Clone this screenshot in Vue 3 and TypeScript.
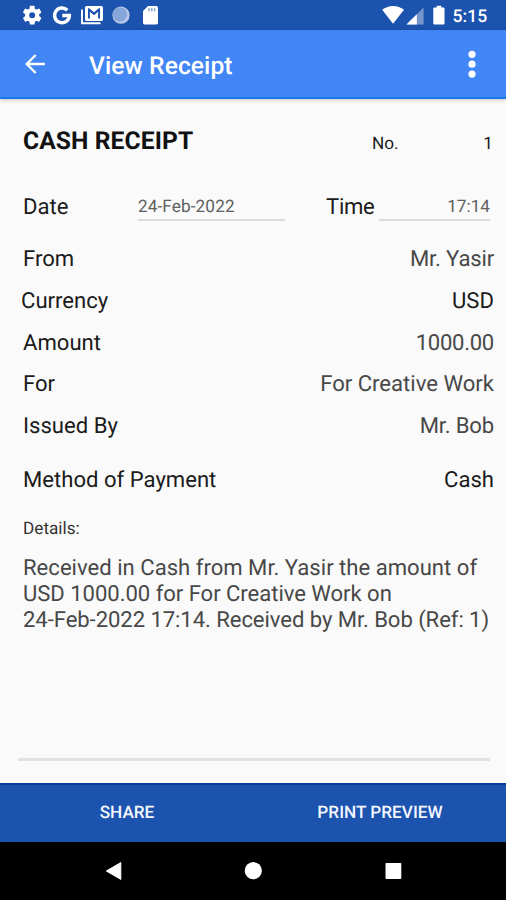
<script setup lang="ts">
interface Field {
  label: string
  value: string
  tone?: string
  shifted?: boolean
}

const fields: Field[] = [
  { label: 'From', value: 'Mr. Yasir', tone: 'snug' },
  { label: 'Currency', value: 'USD', tone: 'strong', shifted: true },
  { label: 'Amount', value: '1000.00', tone: 'digits' },
  { label: 'For', value: 'For Creative Work' },
  { label: 'Issued By', value: 'Mr. Bob', tone: 'snug' },
]

const detailLines: string[] = [
  'Received in Cash from Mr. Yasir the amount of',
  'USD 1000.00 for For Creative Work on',
  '24-Feb-2022 17:14. Received by Mr. Bob (Ref: 1)',
]
</script>

<template>
  <div class="screen">
    <div class="status">
      <svg class="status-icons" width="140" height="30" viewBox="0 0 140 30">
        <g transform="translate(0.9 3.9) scale(0.94)">
          <path fill="#fff" d="M19.43 12.98c.04-.32.07-.64.07-.98s-.03-.66-.07-.98l2.11-1.65c.19-.15.24-.42.12-.64l-2-3.46c-.12-.22-.39-.3-.61-.22l-2.49 1c-.52-.4-1.08-.73-1.69-.98l-.38-2.65C14.46 2.18 14.25 2 14 2h-4c-.25 0-.46.18-.49.42l-.38 2.65c-.61.25-1.17.59-1.69.98l-2.49-1c-.23-.09-.49 0-.61.22l-2 3.46c-.13.22-.07.49.12.64l2.11 1.65c-.04.32-.07.65-.07.98s.03.66.07.98l-2.11 1.65c-.19.15-.24.42-.12.64l2 3.46c.12.22.39.3.61.22l2.49-1c.52.4 1.08.73 1.69.98l.38 2.65c.03.24.24.42.49.42h4c.25 0 .46-.18.49-.42l.38-2.65c.61-.25 1.17-.59 1.69-.98l2.49 1c.23.09.49 0 .61-.22l2-3.46c.12-.22.07-.49-.12-.64l-2.11-1.65zM12 15.2A3.2 3.2 0 1 1 12 8.8a3.2 3.2 0 0 1 0 6.4z" />
        </g>
        <path d="M47.3 10.2A7.4 7.4 0 1 0 49.4 15.5H42.3" fill="none" stroke="#fff" stroke-width="3.4" />
        <path d="M62 9.5V23.2H80.5" fill="none" stroke="#fff" stroke-width="1.9" />
        <path fill="#fff" fill-rule="evenodd" d="M66.6 6H81.4A1.6 1.6 0 0 1 83 7.6V19.4A1.6 1.6 0 0 1 81.4 21H66.6A1.6 1.6 0 0 1 65 19.4V7.6A1.6 1.6 0 0 1 66.6 6ZM68 8.2V18.6H69.9V11.8L74 15.2L78.1 11.8V18.6H80V8.2H78.8L74 12.3L69.2 8.2Z" />
        <circle cx="101" cy="15.2" r="8.6" fill="#b9cbe9" />
        <circle cx="100" cy="14.6" r="7.2" fill="#86a5d8" />
        <path d="M128 6H136.4A1.6 1.6 0 0 1 138 7.6V22.8A1.6 1.6 0 0 1 136.4 24.4H124.6A1.6 1.6 0 0 1 123 22.8V10.9Z" fill="#fff" />
        <path d="M129 8.2V11.2M131.8 8.2V11.2M134.6 8.2V11.2" stroke="#7f9cd0" stroke-width="1.4" />
      </svg>
      <div class="status-right">
        <svg width="66" height="30" viewBox="0 0 66 30">
          <path d="M0.2 9.8C6.4 4.7 15.8 4.7 22 9.8L11 23.8Z" fill="#fff" />
          <path d="M41.6 7.4V24.5H24.5Z" fill="#7795cd" />
          <path d="M34.8 14.2V24.5H24.5Z" fill="#fff" />
          <path d="M54.7 5.8H59.3V7.5H61.3A1.2 1.2 0 0 1 62.5 8.7V23.3A1.2 1.2 0 0 1 61.3 24.5H52.5A1.2 1.2 0 0 1 51.3 23.3V8.7A1.2 1.2 0 0 1 52.5 7.5H54.7Z" fill="#fff" />
        </svg>
        <span class="clock">5:15</span>
      </div>
    </div>

    <header class="appbar">
      <svg class="back" width="22" height="22" viewBox="0 0 22 22">
        <path d="M20.9 11H3.1M11.7 2L2.7 11L11.7 20" fill="none" stroke="#fff" stroke-width="2.3" />
      </svg>
      <h1 class="title">View Receipt</h1>
      <svg class="more" width="8" height="28" viewBox="0 0 8 28">
        <circle cx="4" cy="4.3" r="3.6" fill="#fff" />
        <circle cx="4" cy="14.2" r="3.6" fill="#fff" />
        <circle cx="4" cy="24.1" r="3.6" fill="#fff" />
      </svg>
    </header>

    <main class="content">
      <div class="heading">
        <h2 class="receipt">CASH RECEIPT</h2>
        <span class="no">No.</span>
        <span class="num">1</span>
      </div>
      <div class="when">
        <span class="label date-label">Date</span>
        <span class="input date">24-Feb-2022</span>
        <span class="label time-label">Time</span>
        <span class="input time">17:14</span>
      </div>
      <div class="fields">
        <div v-for="f in fields" :key="f.label" class="row">
          <span class="label" :class="{ shifted: f.shifted }">{{ f.label }}</span>
          <span class="value" :class="f.tone">{{ f.value }}</span>
        </div>
      </div>
      <div class="row method">
        <span class="label">Method of Payment</span>
        <span class="value strong">Cash</span>
      </div>
      <div class="details-label">Details:</div>
      <div class="details">
        <div v-for="line in detailLines" :key="line" class="line">{{ line }}</div>
      </div>
      <div class="rule"></div>
    </main>

    <div class="actions">
      <button class="action" type="button">SHARE</button>
      <button class="action" type="button">PRINT PREVIEW</button>
    </div>
    <nav class="nav">
      <svg width="506" height="58" viewBox="0 0 506 58">
        <path d="M106.3 29L120.8 20.6V37.4Z" fill="#fff" stroke="#fff" stroke-width="1" stroke-linejoin="round" />
        <circle cx="253.3" cy="28.7" r="8.6" fill="#fff" />
        <rect x="385.5" y="21" width="15.8" height="16" rx=".8" fill="#fff" />
      </svg>
    </nav>
  </div>
</template>

<style>
body {
  margin: 0;
}
</style>

<style scoped>
.screen {
  width: 506px;
  height: 900px;
  display: flex;
  flex-direction: column;
  overflow: hidden;
  background: #fafafa;
  font-family: Roboto, "Liberation Sans", sans-serif;
  text-rendering: geometricPrecision;
  color: #1b1b1b;
  white-space: nowrap;
}
.status {
  height: 30px;
  flex: none;
  display: flex;
  justify-content: space-between;
  background: #1c53ae;
  padding: 0 18px 0 20px;
}
.status-right {
  display: flex;
}
.clock {
  box-sizing: border-box;
  width: 40px;
  padding-left: 4.5px;
  font-size: 17.6px;
  line-height: 34px;
  font-weight: 500;
  color: #fff;
}
.appbar {
  height: 69px;
  flex: none;
  box-sizing: border-box;
  display: flex;
  align-items: center;
  padding: 0 30px 0 24px;
  background: #4285f4;
  border-bottom: 2px solid #1a78e6;
  box-shadow: 0 1px 4px rgba(0, 0, 0, 0.22);
}
.back {
  margin-top: 1px;
}
.title {
  margin: 7px 0 0 43px;
  font-size: 24.6px;
  line-height: 30px;
  font-weight: 500;
  letter-spacing: 0.08px;
  color: #fff;
}
.more {
  margin-left: auto;
}
.content {
  height: 684px;
  flex: none;
  box-sizing: border-box;
  padding: 28px 12px 0 23px;
}
.heading {
  display: flex;
  align-items: center;
  height: 30px;
}
.receipt {
  width: 349px;
  margin: 0;
  font-size: 24.6px;
  line-height: 30px;
  font-weight: 700;
  letter-spacing: 0.1px;
  color: #111;
}
.no,
.num {
  font-size: 17.2px;
  line-height: 20px;
  padding-top: 4px;
}
.num {
  margin: 0 1px 0 auto;
}
.when {
  display: flex;
  height: 30px;
  margin-top: 35px;
}
.label,
.value {
  font-size: 22.1px;
  line-height: 30px;
}
.value {
  color: #484848;
}
.value.strong {
  color: #1b1b1b;
}
.value.snug {
  letter-spacing: -0.17px;
}
.value.digits {
  letter-spacing: -0.28px;
}
.shifted {
  margin-left: -2px;
}
.date-label {
  width: 115px;
}
.time-label {
  width: 53px;
  letter-spacing: -0.3px;
}
.input {
  box-sizing: border-box;
  height: 29px;
  font-size: 17.2px;
  line-height: 30px;
  color: #606060;
  border-bottom: 2px solid #dcdcdc;
}
.date {
  width: 147px;
  margin-right: 41px;
  letter-spacing: 0.1px;
}
.time {
  width: 111px;
  text-align: right;
}
.fields {
  display: flex;
  flex-direction: column;
  gap: 11.8px;
  margin-top: 22px;
}
.row {
  display: flex;
  justify-content: space-between;
  height: 30px;
}
.method {
  margin-top: 24px;
}
.details-label {
  margin-top: 24px;
  font-size: 17.2px;
  line-height: 20px;
  color: #333;
}
.details {
  margin-top: 16px;
  font-size: 22.1px;
  line-height: 26px;
  color: #484848;
}
.line:nth-child(2) {
  letter-spacing: -0.05px;
}
.line:nth-child(3) {
  letter-spacing: -0.075px;
}
.rule {
  width: 472px;
  height: 3px;
  margin: 125px 0 0 -5px;
  background: #e2e2e2;
}
.actions {
  height: 59px;
  flex: none;
  box-sizing: border-box;
  display: grid;
  grid-template-columns: 1fr 1fr;
  background: #1c53ae;
  border-top: 2px solid #0c3b9d;
}
.action {
  padding: 0 0 1px 1px;
  border: 0;
  background: none;
  font-family: inherit;
  font-size: 17.2px;
  font-weight: 500;
  text-rendering: inherit;
  color: #f3f6ff;
}
.nav {
  height: 58px;
  flex: none;
  background: #000;
}
</style>
